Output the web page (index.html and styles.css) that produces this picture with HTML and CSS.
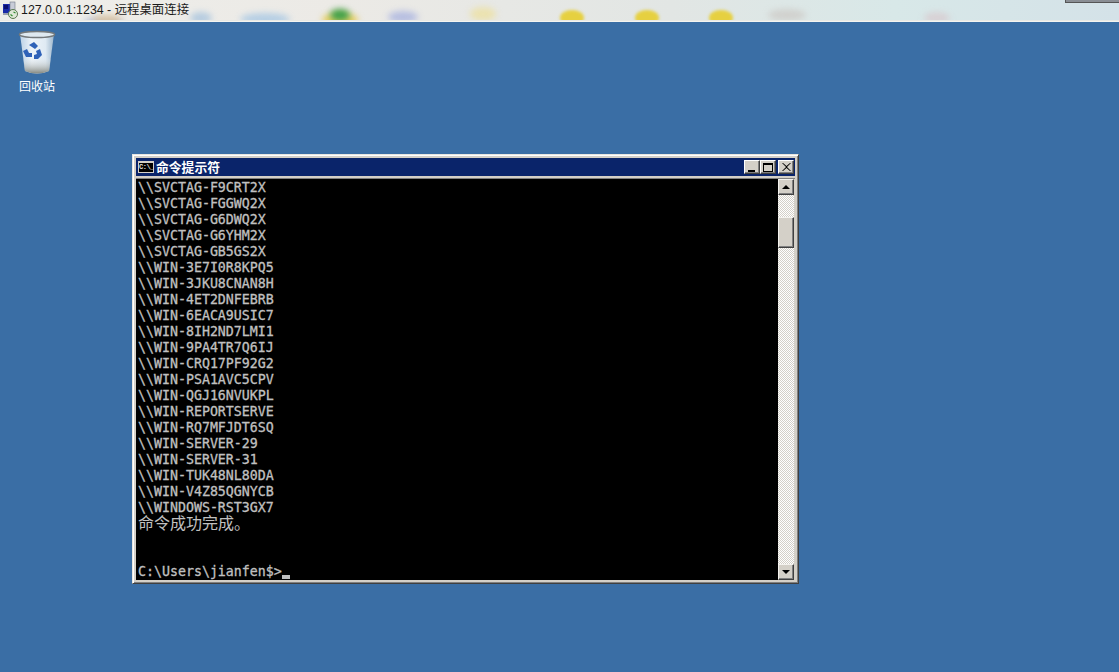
FILE: index.html
```html
<!DOCTYPE html>
<html lang="zh">
<head>
<meta charset="utf-8">
<title>远程桌面连接</title>
<link rel="stylesheet" href="styles.css">
</head>
<body>
<div class="topbar">
  <div class="blobs">
    <span class="blob b1"></span><span class="blob b2"></span><span class="blob b3"></span>
    <span class="blob b4"></span><span class="blob b5"></span><span class="blob b5g"></span><span class="blob b6"></span>
    <span class="blob b7"></span><span class="blob b8"></span><span class="blob b9"></span>
    <span class="blob b10"></span><span class="blob b11"></span><span class="blob b12"></span>
  </div>
  <svg class="rdp-icon" width="16" height="18" viewBox="0 0 16 18">
    <rect x="1" y="3" width="8" height="9" fill="#1a2aa8"/>
    <rect x="2" y="4" width="4" height="4" fill="#0a1070"/>
    <rect x="8" y="1" width="5" height="8" fill="#c8ccd8" stroke="#707888" stroke-width=".6"/>
    <rect x="1" y="12" width="7" height="2" fill="#9aa0b0"/>
    <circle cx="11" cy="13" r="4.500" fill="#dfe8d8" stroke="#5a7a50"/>
    <path d="M8.500 13.500l2 1.500M13.500 12l-2-1" stroke="#2f8a30" stroke-width="1.200"/>
  </svg>
  <span class="rdp-title">127.0.0.1:1234 - 远程桌面连接</span>
  <div class="corner-tab"></div>
</div>
<main class="desktop">
  <div class="desk-icon">
    <svg width="38" height="46" viewBox="0 0 38 46">
      <defs>
        <linearGradient id="binBody" x1="0" x2="1" y1="0" y2="0">
          <stop offset="0" stop-color="#bcd2e6"/>
          <stop offset=".35" stop-color="#eef4f9"/>
          <stop offset=".75" stop-color="#dfeaf3"/>
          <stop offset="1" stop-color="#9db6cc"/>
        </linearGradient>
        <linearGradient id="binBase" x1="0" x2="0" y1="0" y2="1">
          <stop offset="0" stop-color="#e8eef2" stop-opacity="0"/>
          <stop offset="1" stop-color="#84877f"/>
        </linearGradient>
      </defs>
      <path d="M2 4 L7 41 Q19 46 31 41 L36 4 Z" fill="url(#binBody)"/>
      <path d="M5 29 Q19 25 33 29 L31 41 Q19 46 7 41 Z" fill="url(#binBase)"/>
      <ellipse cx="19" cy="4.500" rx="17.500" ry="3" fill="#dfe9f0" stroke="#74797c" stroke-width="1.500"/>
      <path d="M11 15 l5-3 4 4-3 3z M5 21 l3 6 6 0 0-4-3 0-2-4z M18 21 l4-2 2 6-4 4-4 0 0-4 3-1z" fill="#2f62b8"/>
    </svg>
    <span class="desk-label">回收站</span>
  </div>

  <section class="cmd-window">
    <header class="titlebar">
      <span class="cmd-icon">C:\_</span>
      <span class="cmd-title">命令提示符</span>
      <div class="win-buttons">
        <span class="win-btn"><i class="g-min"></i></span>
        <span class="win-btn"><i class="g-max"></i></span>
        <span class="win-btn gap">
          <svg width="9" height="8" viewBox="0 0 9 8"><path d="M1 0l3.500 3L8 0h1L5 4l4 4H8L4.500 5 1 8H0l4-4L0 0z" fill="#000"/></svg>
        </span>
      </div>
    </header>
    <div class="client">
      <div class="console">
        <div class="line">\\SVCTAG-F9CRT2X</div>
        <div class="line">\\SVCTAG-FGGWQ2X</div>
        <div class="line">\\SVCTAG-G6DWQ2X</div>
        <div class="line">\\SVCTAG-G6YHM2X</div>
        <div class="line">\\SVCTAG-GB5GS2X</div>
        <div class="line">\\WIN-3E7I0R8KPQ5</div>
        <div class="line">\\WIN-3JKU8CNAN8H</div>
        <div class="line">\\WIN-4ET2DNFEBRB</div>
        <div class="line">\\WIN-6EACA9USIC7</div>
        <div class="line">\\WIN-8IH2ND7LMI1</div>
        <div class="line">\\WIN-9PA4TR7Q6IJ</div>
        <div class="line">\\WIN-CRQ17PF92G2</div>
        <div class="line">\\WIN-PSA1AVC5CPV</div>
        <div class="line">\\WIN-QGJ16NVUKPL</div>
        <div class="line">\\WIN-REPORTSERVE</div>
        <div class="line">\\WIN-RQ7MFJDT6SQ</div>
        <div class="line">\\WIN-SERVER-29</div>
        <div class="line">\\WIN-SERVER-31</div>
        <div class="line">\\WIN-TUK48NL80DA</div>
        <div class="line">\\WIN-V4Z85QGNYCB</div>
        <div class="line">\\WINDOWS-RST3GX7</div>
        <div class="line cjk">命令成功完成。</div>
        <div class="line"></div>
        <div class="line"></div>
        <div class="line">C:\Users\jianfen$&gt;<b class="caret"></b></div>
      </div>
      <div class="scrollbar">
        <span class="sb-btn"><i class="arrow-up"></i></span>
        <div class="sb-track"><span class="sb-thumb"></span></div>
        <span class="sb-btn"><i class="arrow-down"></i></span>
      </div>
    </div>
  </section>
</main>
</body>
</html>
```
FILE: styles.css
```css
* { box-sizing: border-box; }
html, body { margin: 0; height: 100%; overflow: hidden; }
body {
  width: 1119px;
  height: 672px;
  background: #3a6ea5;
  display: flex;
  flex-direction: column;
  font-family: "Liberation Sans", "Noto Sans CJK SC", sans-serif;
}

/* top connection bar */
.topbar {
  position: relative;
  height: 22px;
  flex: none;
  display: flex;
  align-items: center;
  padding: 0 0 2px 2px;
  gap: 3px;
  background: linear-gradient(90deg, #eeeeea 0, #eceae6 30%, #e2e6e4 60%, #d8e8e8 80%, #d4e2e8 100%);
  border-bottom: 1px solid #f4f4f0;
  box-shadow: inset 0 -1px 0 #e8e8e4;
  overflow: hidden;
}
.blobs { position: absolute; inset: 0 0 1px 0; overflow: hidden; }
.blob { position: absolute; border-radius: 50%; filter: blur(3px); }
.b1 { left: 84px; top: 17px; width: 40px; height: 10px; background: #8fa0d0; opacity: .6; }
.b2 { left: 92px; top: 15px; width: 30px; height: 10px; background: #f0c070; opacity: .5; }
.b3 { left: 190px; top: 12px; width: 22px; height: 12px; background: #a8c4de; opacity: .8; }
.b4 { left: 240px; top: 13px; width: 50px; height: 12px; background: #a8c8e4; opacity: .8; }
.b5 { left: 322px; top: 13px; width: 36px; height: 14px; background: #e8cf60; }
.b5g { left: 330px; top: 9px; width: 20px; height: 12px; background: #3fa048; }
.b6 { left: 388px; top: 11px; width: 30px; height: 12px; background: #aab4e0; opacity: .8; }
.b7 { left: 470px; top: 7px; width: 26px; height: 14px; background: #ebe2b0; }
.b8 { left: 560px; top: 10px; width: 24px; height: 16px; background: #e6d040; filter: blur(1.500px); }
.b9 { left: 635px; top: 10px; width: 24px; height: 16px; background: #e6d040; filter: blur(1.500px); }
.b10 { left: 709px; top: 10px; width: 24px; height: 16px; background: #e6d040; filter: blur(1.500px); }
.b11 { left: 768px; top: 9px; width: 38px; height: 12px; background: #ccc8c4; opacity: .7; }
.b12 { left: 924px; top: 12px; width: 26px; height: 12px; background: #d8ccd0; opacity: .8; }
.rdp-icon { position: relative; flex: none; }
.rdp-title {
  position: relative;
  font-size: 12.400px;
  line-height: 20px;
  color: #1a1a1a;
  white-space: nowrap;
}
.corner-tab {
  position: absolute;
  right: 0;
  top: 0;
  width: 54px;
  height: 3px;
  background: #8a8e94;
  border: 1px solid #555;
  border-top: 0;
  border-right: 0;
}

/* desktop */
.desktop {
  position: relative;
  flex: 1;
  padding: 8px 0 0 14px;
}
.desk-icon {
  width: 46px;
  display: flex;
  flex-direction: column;
  align-items: center;
  gap: 3px;
}
.desk-label {
  color: #fff;
  font-size: 12px;
  line-height: 16px;
  white-space: nowrap;
}

/* command prompt window */
.cmd-window {
  position: absolute;
  left: 132px;
  top: 132px;
  width: 667px;
  height: 430px;
  background: #d4d0c8;
  border: 1px solid;
  border-color: #e8e6e0 #404040 #404040 #e8e6e0;
  box-shadow: inset 1px 1px 0 #fff, inset -1px -1px 0 #808080;
  padding: 3px;
  display: flex;
  flex-direction: column;
  gap: 2px;
}
.titlebar {
  height: 18px;
  flex: none;
  background: #0a246a;
  display: flex;
  align-items: center;
  padding: 0 1px 0 2px;
  gap: 2px;
}
.cmd-icon {
  width: 16px;
  height: 12px;
  background: #000;
  border: 1px solid #d4d0c8;
  border-top-width: 2px;
  color: #e0e0e0;
  font: 700 7px/9px "Liberation Mono", monospace;
  overflow: hidden;
  white-space: nowrap;
  letter-spacing: -.5px;
}
.cmd-title {
  color: #fff;
  font: 700 12.800px/16px "Noto Sans CJK SC", sans-serif;
  flex: 1;
}
.win-buttons { display: flex; }
.win-btn {
  width: 16px;
  height: 14px;
  background: #d4d0c8;
  border: 1px solid;
  border-color: #fff #404040 #404040 #fff;
  box-shadow: inset -1px -1px 0 #808080;
  display: flex;
  align-items: center;
  justify-content: center;
}
.win-btn.gap { margin-left: 2px; }
.g-min { width: 7px; height: 2px; background: #000; margin-top: 7px; margin-right: 2px; }
.g-max { width: 10px; height: 9px; border: 1px solid #000; border-top-width: 2px; }

.client {
  flex: 1;
  min-height: 0;
  display: flex;
  border-top: 1px solid #808080;
  padding-right: 1px;
}
.console {
  flex: 1;
  padding: 1px 0 0 2px;
  background: #000;
  color: #c0c0c0;
  font: 400 13.280px/16px "DejaVu Sans Mono", "Noto Sans CJK SC", monospace;
  overflow: hidden;
}
.line { height: 16px; white-space: pre; -webkit-text-stroke: .3px #c0c0c0; }
.line.cjk { font: 400 16px/12px "Noto Sans CJK SC", sans-serif; -webkit-text-stroke: 0; }
.caret {
  display: inline-block;
  width: 8px;
  height: 4px;
  background: #c0c0c0;
  vertical-align: -3px;
}

.scrollbar {
  width: 16px;
  flex: none;
  display: flex;
  flex-direction: column;
}
.sb-btn, .sb-thumb {
  display: flex;
  align-items: center;
  justify-content: center;
  background: #d4d0c8;
  border: 1px solid;
  border-color: #f4f2ee #404040 #404040 #f4f2ee;
  box-shadow: inset -1px -1px 0 #808080;
}
.sb-btn { height: 16px; flex: none; }
.sb-track {
  flex: 1;
  padding-top: 22px;
  background-color: #ece9e2;
  background-image: repeating-conic-gradient(#d4d0c8 0 25%, #fff 0 50%);
  background-size: 2px 2px;
}
.sb-thumb { height: 31px; }
.arrow-up, .arrow-down { width: 0; height: 0; border-left: 4px solid transparent; border-right: 4px solid transparent; }
.arrow-up { border-bottom: 4px solid #000; }
.arrow-down { border-top: 4px solid #000; }
```
